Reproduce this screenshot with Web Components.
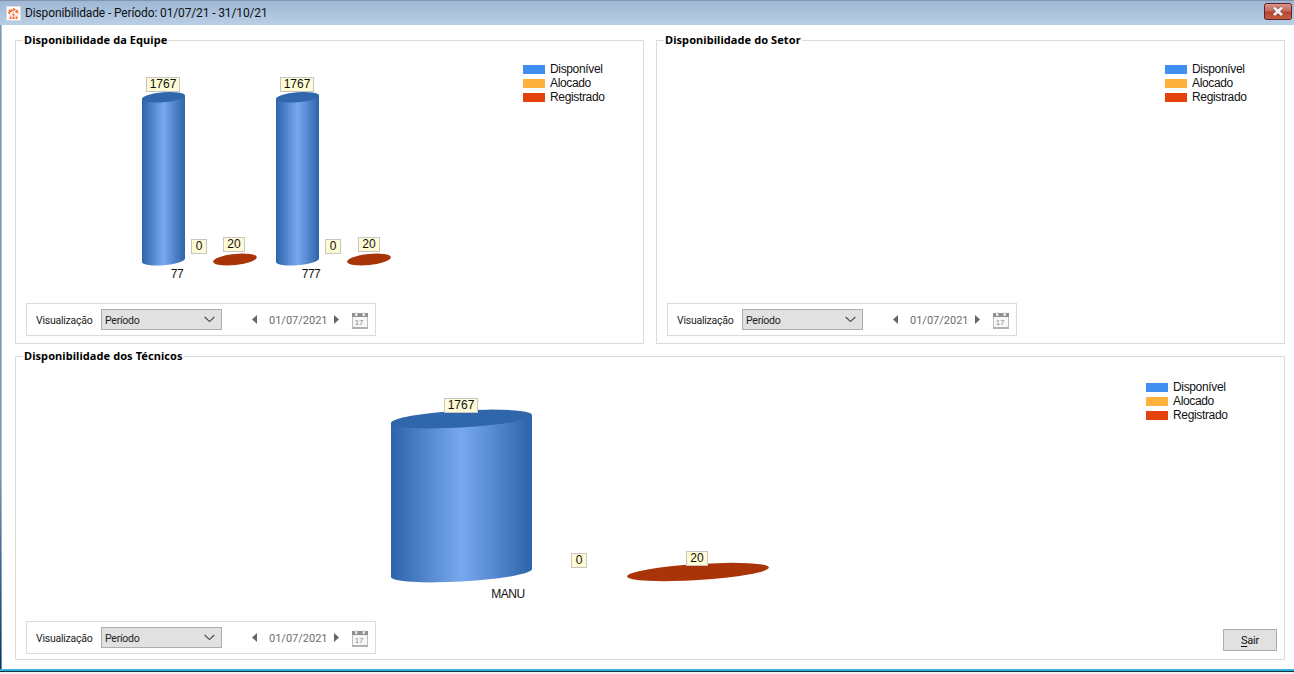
<!DOCTYPE html>
<html>
<head>
<meta charset="utf-8">
<title>Disponibilidade</title>
<style>
  html, body { margin: 0; height: 100%; background: #f0f0f0; overflow: hidden; }
  body { font-family: Roboto, "Liberation Sans", sans-serif; font-size: 11px; color: #000; }
</style>
</head>
<body>
<app-window title="Disponibilidade - Período: 01/07/21 - 31/10/21">
  <group-box label="Disponibilidade da Equipe" style="grid-area: equipe; --foot: 7px">
    <cyl-chart variant="equipe"></cyl-chart>
    <view-toolbar slot="footer"></view-toolbar>
  </group-box>
  <group-box label="Disponibilidade do Setor" style="grid-area: setor; --foot: 7px">
    <cyl-chart variant="setor"></cyl-chart>
    <view-toolbar slot="footer"></view-toolbar>
  </group-box>
  <group-box label="Disponibilidade dos Técnicos" style="grid-area: tecnicos">
    <cyl-chart variant="tecnicos"></cyl-chart>
    <view-toolbar slot="footer"></view-toolbar>
    <exit-button slot="footer"></exit-button>
  </group-box>
</app-window>

<script>
class AppWindow extends HTMLElement {
  constructor() {
    super();
    this.root = this.attachShadow({ mode: "open" });
  }
  connectedCallback() {
    this.root.innerHTML = `
      <style>
        :host { display: flex; flex-direction: column; width: 1294px; height: 672px; box-sizing: border-box;
                padding-left: 2px; border-bottom: 1px solid #1b2f42; box-shadow: inset 0 -2px 0 #2fb4d6;
                background: linear-gradient(#7f97b3 70%, #1b2f42) 0 0 / 1px 100% no-repeat,
                            linear-gradient(#a9c0d8 70%, #4f8fc4) 1px 0 / 1px 100% no-repeat, #fff; }
        .bar { height: 25px; flex: none; display: flex; align-items: center; margin: 0 0 0 -2px;
               background: linear-gradient(#9fb7d3, #b9cfe6); border-top: 1px solid #7f94ad; box-sizing: border-box; }
        .logo { width: 15px; height: 15px; margin: 0 4px 0 6px; flex: none; }
        .title { flex: 1; font-size: 12px; letter-spacing: -.13px; color: #101010; }
        .close { width: 28px; height: 17px; margin: -3px 2px 0 0; flex: none; }
        .body { flex: 1; display: grid; padding: 15px 8px 8px 13px;
                grid-template-columns: 629px 629px; column-gap: 12px;
                grid-template-rows: 304px 304px; row-gap: 12px;
                grid-template-areas: "equipe setor" "tecnicos tecnicos"; }
      </style>
      <div class="bar">
        <svg class="logo" viewBox="0 0 15 15">
          <rect x=".5" y=".5" width="14" height="14" fill="#fff" stroke="#d8dde4"/>
          <path d="M2.5 7.5 7.5 3 12.5 7.5M4.5 13V9.5M7.5 13V6M10.5 13V9.5M3 4 5 6M10 6 12 4" fill="none" stroke="#f26a2a" stroke-width="2" stroke-dasharray="2.4 .8"/>
        </svg>
        <div class="title">${this.getAttribute("title")}</div>
        <svg class="close" viewBox="0 0 28 17">
          <defs><linearGradient id="c" x1="0" y1="0" x2="0" y2="1">
            <stop offset="0" stop-color="#dc978c"/><stop offset=".45" stop-color="#c66a5c"/>
            <stop offset=".55" stop-color="#b5432f"/><stop offset="1" stop-color="#c9623f"/>
          </linearGradient></defs>
          <rect x=".5" y=".5" width="27" height="16" rx="2" fill="url(#c)" stroke="#5a2034"/>
          <path d="M10 4.5 18 12M18 4.5 10 12" stroke="#5a3a3a" stroke-width="4.4" opacity=".7"/>
          <path d="M10 4.5 18 12M18 4.5 10 12" stroke="#f0f0f0" stroke-width="3"/>
        </svg>
      </div>
      <div class="body"><slot></slot></div>
    `;
  }
}

class GroupBox extends HTMLElement {
  constructor() {
    super();
    this.root = this.attachShadow({ mode: "open" });
  }
  connectedCallback() {
    this.root.innerHTML = `
      <style>
        :host { display: flex; flex-direction: column; position: relative; box-sizing: border-box;
                border: 1px solid #dcdcdc; padding: 0 7px var(--foot, 5px) 10px; min-width: 0; }
        .label { position: absolute; left: 7px; top: -8px; padding: 0 1px; background: #fff;
                 font-family: "Noto Sans", sans-serif; font-weight: 700; font-size: 11px; line-height: 14px; letter-spacing: .08px; }
        .main { flex: 1; min-height: 0; display: flex; }
        .footer { display: flex; justify-content: space-between; align-items: flex-end; }
      </style>
      <div class="label">${this.getAttribute("label")}</div>
      <div class="main"><slot></slot></div>
      <div class="footer"><slot name="footer"></slot></div>
    `;
  }
}

class ChartLegend extends HTMLElement {
  constructor() {
    super();
    this.root = this.attachShadow({ mode: "open" });
    this.root.innerHTML = `
      <style>
        :host { display: flex; flex-direction: column; flex: none; font: 12px/14px "Liberation Sans", sans-serif; letter-spacing: -.35px; color: #111; }
        .row { display: flex; align-items: center; gap: 5px; height: 14px; }
        i { width: 22px; height: 9px; display: block; }
      </style>
      <div class="row"><i style="background:#3f8ef0"></i>Disponível</div>
      <div class="row"><i style="background:#ffb13d"></i>Alocado</div>
      <div class="row"><i style="background:#e3420b"></i>Registrado</div>
    `;
  }
}

// cylinder from its left end, right end and height, in the chart's coords
function cylinder(x0, y0, x1, y1, h, ry, id) {
  const rx = Math.hypot(x1 - x0, y1 - y0) / 2;
  const rot = Math.atan2(y1 - y0, x1 - x0) * 180 / Math.PI;
  const cx = (x0 + x1) / 2, cy = (y0 + y1) / 2;
  return `
    <path d="M${x0} ${y0}V${y0 + h}A${rx} ${ry} ${rot} 0 0 ${x1} ${y1 + h}V${y1}Z" fill="url(#${id})"/>
    <ellipse cx="${cx}" cy="${cy}" rx="${rx}" ry="${ry}" transform="rotate(${rot} ${cx} ${cy})" fill="#2f66ac"/>`;
}

function disc(cx, cy, rx, ry, rot) {
  return `<ellipse cx="${cx}" cy="${cy}" rx="${rx}" ry="${ry}" transform="rotate(${rot} ${cx} ${cy})" fill="#a83407"/>`;
}

const CHARTS = {
  equipe: {
    legend: [497, 21],
    svg: cylinder(116, 58, 159, 54.5, 163, 5, "blue") + disc(209, 218.5, 22, 5.6, -6) +
         cylinder(250, 58, 293, 54.5, 163, 5, "blue") + disc(343, 218.5, 22, 5.6, -6),
    tips: [["1767", 120, 36, 34], ["0", 165, 198, 16], ["20", 197, 196, 22],
           ["1767", 254, 36, 34], ["0", 299, 198, 16], ["20", 332, 196, 22]],
    cats: [["77", 151, 226], ["777", 285, 226]]
  },
  setor: { legend: [498, 21], svg: "", tips: [], cats: [] },
  tecnicos: {
    legend: [1120, 23],
    svg: cylinder(365, 66, 506, 58, 154, 8.5, "blue") + disc(672, 215, 71, 8, -3.6),
    tips: [["1767", 418, 41, 34], ["0", 545, 196, 16], ["20", 660, 194, 22]],
    cats: [["MANU", 482, 230]]
  }
};

class CylChart extends HTMLElement {
  constructor() {
    super();
    this.root = this.attachShadow({ mode: "open" });
  }
  connectedCallback() {
    const c = CHARTS[this.getAttribute("variant")];
    const tips = c.tips.map(([t, x, y, w]) =>
      `<div class="tip" style="left:${x}px;top:${y}px;width:${w}px">${t}</div>`).join("");
    const cats = c.cats.map(([t, x, y]) =>
      `<div class="cat" style="left:${x}px;top:${y}px">${t}</div>`).join("");
    this.root.innerHTML = `
      <style>
        :host { display: block; flex: 1; position: relative; font: 12px/14px "Liberation Sans", sans-serif; color: #111; }
        svg { position: absolute; left: 0; top: 0; width: 100%; height: 100%; }
        .tip { position: absolute; box-sizing: border-box; height: 15px; line-height: 13px; text-align: center;
               background: #fffbd5; border: 1px solid #c6c6c6; }
        .cat { position: absolute; transform: translateX(-50%); white-space: nowrap; letter-spacing: -.5px; }
        chart-legend { position: absolute; left: ${c.legend[0]}px; top: ${c.legend[1]}px; }
      </style>
      <svg>
        <defs>
          <linearGradient id="blue" x1="0" y1="0" x2="1" y2="0">
            <stop offset="0" stop-color="#2d63aa"/>
            <stop offset=".5" stop-color="#78a9ee"/>
            <stop offset="1" stop-color="#2d63aa"/>
          </linearGradient>
        </defs>
        ${c.svg}
      </svg>
      ${tips}${cats}
      <chart-legend></chart-legend>
    `;
  }
}

class ViewToolbar extends HTMLElement {
  constructor() {
    super();
    this.root = this.attachShadow({ mode: "open" });
    this.root.innerHTML = `
      <style>
        :host { display: flex; align-items: center; box-sizing: border-box; width: 350px; height: 33px;
                border: 1px solid #dcdcdc; padding-left: 9px; font-size: 10.5px; letter-spacing: -.25px; color: #222; }
        span { padding-top: 1px; }
        .name { width: 57px; white-space: nowrap; }
        .sel { width: 121px; height: 21px; box-sizing: border-box; margin-left: 8px; padding: 0 6px 0 3px; display: flex;
               align-items: center; justify-content: space-between; background: #e1e1e1; border: 1px solid #adadad; }
        .arrow { margin-left: 30px; }
        .date { width: 57px; margin: 0 8px 0 12px; font-size: 11px; letter-spacing: 0; color: #6d6d6d; white-space: nowrap; }
        .cal { margin-left: 13px; }
        svg { display: block; flex: none; }
      </style>
      <span class="name">Visualização</span>
      <div class="sel">
        <span>Período</span>
        <svg width="11" height="7" viewBox="0 0 11 7"><path d="M.7 1 5.5 5.6 10.3 1" fill="none" stroke="#444" stroke-width="1.1"/></svg>
      </div>
      <svg class="arrow" width="5" height="9" viewBox="0 0 5 9"><path d="M5 0V9L0 4.5Z" fill="#666"/></svg>
      <span class="date">01/07/2021</span>
      <svg width="5" height="9" viewBox="0 0 5 9"><path d="M0 0V9L5 4.5Z" fill="#666"/></svg>
      <svg class="cal" width="16" height="18" viewBox="0 0 16 18">
        <rect x=".5" y="2.5" width="15" height="15" fill="#f7f7f7" stroke="#bdbdbd"/>
        <rect x="0" y="2" width="16" height="4" fill="#8f8f8f"/>
        <rect x="0" y="16" width="16" height="2" fill="#b0b0b0"/>
        <rect x="3" y="1" width="2.5" height="4" fill="#e4e4e4"/>
        <rect x="10.5" y="1" width="2.5" height="4" fill="#e4e4e4"/>
        <text x="7" y="14" font-size="8" font-family="Liberation Sans, sans-serif" text-anchor="middle" fill="#8a8a8a">17</text>
      </svg>
    `;
  }
}

class ExitButton extends HTMLElement {
  constructor() {
    super();
    this.root = this.attachShadow({ mode: "open" });
    this.root.innerHTML = `
      <style>
        :host { display: flex; align-items: center; justify-content: center; box-sizing: border-box; width: 54px; height: 22px;
                margin: 0 0 3px; background: #e1e1e1; border: 1px solid #adadad; font-size: 11px; letter-spacing: -.2px; color: #111; }
        u { text-underline-offset: 2px; }
      </style>
      <span><u>S</u>air</span>
    `;
  }
}

customElements.define("chart-legend", ChartLegend);
customElements.define("cyl-chart", CylChart);
customElements.define("view-toolbar", ViewToolbar);
customElements.define("exit-button", ExitButton);
customElements.define("group-box", GroupBox);
customElements.define("app-window", AppWindow);
</script>
</body>
</html>
